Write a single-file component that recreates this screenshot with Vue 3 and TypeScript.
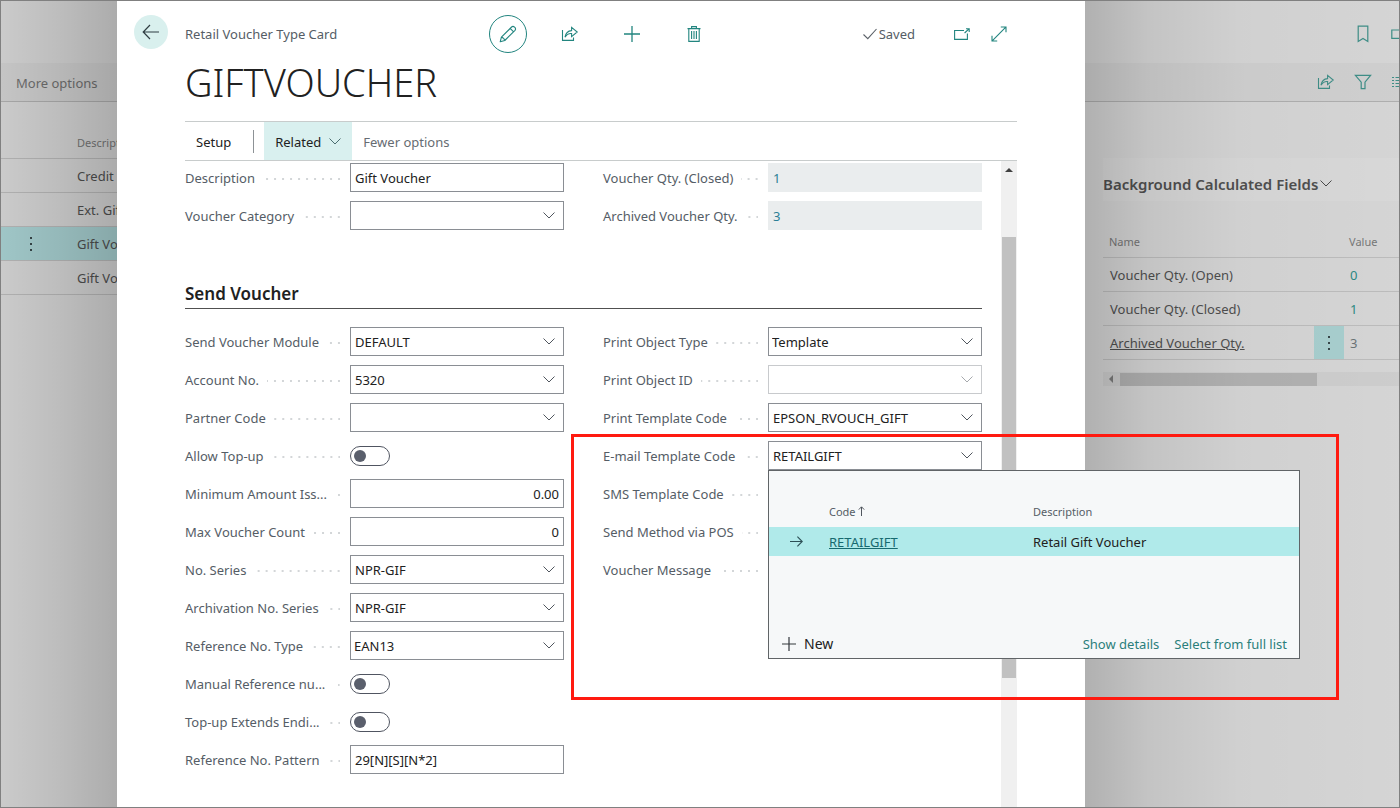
<script setup lang="ts">
import { ref } from 'vue'

type Kind = 'text' | 'number' | 'lookup' | 'option' | 'toggle' | 'readonly'

interface Field {
  id: string
  label: string
  kind: Kind
  value?: string
  disabled?: boolean
  popup?: boolean
}

const generalFields = ref<Field[][]>([
  [
    { id: 'description', label: 'Description', kind: 'text', value: 'Gift Voucher' },
    { id: 'category', label: 'Voucher Category', kind: 'option', value: '' },
  ],
  [
    { id: 'qty-closed', label: 'Voucher Qty. (Closed)', kind: 'readonly', value: '1' },
    { id: 'qty-archived', label: 'Archived Voucher Qty.', kind: 'readonly', value: '3' },
  ],
])

const sendFields = ref<Field[][]>([
  [
    { id: 'module', label: 'Send Voucher Module', kind: 'lookup', value: 'DEFAULT' },
    { id: 'account', label: 'Account No.', kind: 'lookup', value: '5320' },
    { id: 'partner', label: 'Partner Code', kind: 'lookup', value: '' },
    { id: 'topup', label: 'Allow Top-up', kind: 'toggle' },
    { id: 'minimum', label: 'Minimum Amount Iss...', kind: 'number', value: '0.00' },
    { id: 'max-count', label: 'Max Voucher Count', kind: 'number', value: '0' },
    { id: 'series', label: 'No. Series', kind: 'lookup', value: 'NPR-GIF' },
    { id: 'archive-series', label: 'Archivation No. Series', kind: 'lookup', value: 'NPR-GIF' },
    { id: 'ref-type', label: 'Reference No. Type', kind: 'option', value: 'EAN13' },
    { id: 'manual-ref', label: 'Manual Reference nu...', kind: 'toggle' },
    { id: 'extends', label: 'Top-up Extends Endi...', kind: 'toggle' },
    { id: 'pattern', label: 'Reference No. Pattern', kind: 'text', value: '29[N][S][N*2]' },
  ],
  [
    { id: 'print-type', label: 'Print Object Type', kind: 'option', value: 'Template' },
    { id: 'print-id', label: 'Print Object ID', kind: 'lookup', value: '', disabled: true },
    { id: 'print-template', label: 'Print Template Code', kind: 'lookup', value: 'EPSON_RVOUCH_GIFT' },
    { id: 'email-template', label: 'E-mail Template Code', kind: 'lookup', value: 'RETAILGIFT', popup: true },
    { id: 'sms-template', label: 'SMS Template Code', kind: 'lookup', value: '' },
    { id: 'send-method', label: 'Send Method via POS', kind: 'option', value: '' },
    { id: 'message', label: 'Voucher Message', kind: 'text', value: '' },
  ],
])

const groups = [
  { title: '', columns: generalFields },
  { title: 'Send Voucher', columns: sendFields },
]

const listRows = [
  { text: 'Credit', selected: false },
  { text: 'Ext. Gift', selected: false },
  { text: 'Gift Voucher', selected: true },
  { text: 'Gift Voucher', selected: false },
]

const factRows = [
  { name: 'Voucher Qty. (Open)', value: '0', current: false },
  { name: 'Voucher Qty. (Closed)', value: '1', current: false },
  { name: 'Archived Voucher Qty.', value: '3', current: true },
]
</script>

<template>
  <div class="page">
    <aside class="back-list">
      <div class="strip"></div>
      <div class="strip bar"><button type="button" class="plain">More options</button></div>
      <table class="list">
        <thead>
          <tr><th class="mark"></th><th>Description</th></tr>
        </thead>
        <tbody>
          <tr v-for="(row, i) in listRows" :key="i" :class="{ selected: row.selected }">
            <td class="mark">
              <svg v-if="row.selected" width="4" height="16" viewBox="0 0 4 16" fill="#38474a"><path d="M1 1h2v2H1zM1 7h2v2H1zM1 13h2v2H1z" /></svg>
            </td>
            <td>{{ row.text }}</td>
          </tr>
        </tbody>
      </table>
    </aside>

    <main class="card">
      <header class="top">
        <button type="button" class="back" aria-label="Back">
          <svg width="18" height="16" viewBox="0 0 18 16" fill="none" stroke="#2f3d42" stroke-width="1.2"><path d="M17 8H1.5M8 1L1.2 8L8 15" /></svg>
        </button>
        <span class="caption">Retail Voucher Type Card</span>
        <div class="tools">
          <button type="button" class="tool ring" aria-label="Edit">
            <svg width="18" height="18" viewBox="0 0 18 18" fill="none" stroke="#22857f" stroke-width="1.1" stroke-linejoin="round"><path d="M1.2 16.8L2.4 12.2L12.6 2Q14 .6 15.6 2.2Q17.3 3.8 16 5.3L5.8 15.5ZM2.4 12.2Q4.4 12.2 4.2 13.8Q5.9 13.6 5.8 15.5M11.2 3.4L14.6 6.8" /></svg>
          </button>
          <button type="button" class="tool" aria-label="Share">
            <svg width="18" height="16" viewBox="0 0 18 16" fill="none" stroke="#22857f" stroke-width="1.1"><path d="M1.5 4V14.4H12.5V11.5M4 11.2Q5 5 10.6 4.6V1.4L16.2 6L10.6 10.6V7.6Q6.6 7.2 4 11.2Z" /></svg>
          </button>
          <button type="button" class="tool" aria-label="New">
            <svg width="16" height="16" viewBox="0 0 16 16" fill="none" stroke="#22857f" stroke-width="1.3"><path d="M8 0V16M0 8H16" /></svg>
          </button>
          <button type="button" class="tool" aria-label="Delete">
            <svg width="14" height="16" viewBox="0 0 14 16" fill="none" stroke="#22857f" stroke-width="1.1"><path d="M.5 2.6H13.5M4.6 2.4V.6H9.4V2.4M1.8 2.6V15.4H12.2V2.6M4.6 5V13M7 5V13M9.4 5V13" /></svg>
          </button>
        </div>
        <div class="state">
          <svg width="14" height="12" viewBox="0 0 14 12" fill="none" stroke="#5b6168" stroke-width="1.1"><path d="M.5 6.5L4.8 10.7L13.5 1" /></svg>
          <span>Saved</span>
        </div>
        <div class="window">
          <button type="button" class="small" aria-label="Open in new window">
            <svg width="16" height="12" viewBox="0 0 16 12" fill="none" stroke="#22857f" stroke-width="1.1"><path d="M10 2.5H.6V11.4H13.4V5.4M10.6 5L15 .8M12 .8H15.2V4" /></svg>
          </button>
          <button type="button" class="small" aria-label="Expand">
            <svg width="16" height="16" viewBox="0 0 16 16" fill="none" stroke="#22857f" stroke-width="1.1"><path d="M1.2 14.8L14.8 1.2M9.8 1H15V6.2M1 9.8V15H6.2" /></svg>
          </button>
        </div>
      </header>

      <h1>GIFTVOUCHER</h1>

      <nav class="commands">
        <button type="button" class="cmd">Setup</button>
        <span class="divider"></span>
        <button type="button" class="cmd open">
          Related
          <svg width="12" height="7" viewBox="0 0 12 7" fill="none" stroke="#4b6d70" stroke-width="1"><path d="M.5 .5L6 6L11.5 .5" /></svg>
        </button>
        <button type="button" class="cmd muted">Fewer options</button>
      </nav>

      <div class="scroll">
        <form class="content" @submit.prevent>
          <section v-for="(group, g) in groups" :key="g">
            <h2 v-if="group.title">{{ group.title }}</h2>
            <div class="columns">
              <div v-for="(column, c) in group.columns.value" :key="c" class="column">
                <div v-for="f in column" :key="f.id" class="field">
                  <label :for="f.id">{{ f.label }}</label>
                  <span class="dots"></span>
                  <div class="control" :class="[f.kind, { disabled: f.disabled }]">
                    <label v-if="f.kind === 'toggle'" class="switch">
                      <input :id="f.id" type="checkbox" role="switch" />
                    </label>
                    <template v-else-if="f.kind === 'option'">
                      <select :id="f.id" v-model="f.value"><option :value="f.value">{{ f.value }}</option></select>
                      <svg class="arrow" width="12" height="7" viewBox="0 0 12 7" fill="none" stroke="#50565e" stroke-width="1"><path d="M.5 .5L6 6L11.5 .5" /></svg>
                    </template>
                    <template v-else>
                      <input :id="f.id" v-model="f.value" type="text" :readonly="f.kind === 'readonly'" :disabled="f.disabled" />
                      <button v-if="f.kind === 'lookup'" type="button" class="pick" :disabled="f.disabled" :aria-label="'Choose ' + f.label">
                        <svg width="12" height="7" viewBox="0 0 12 7" fill="none" stroke="#50565e" stroke-width="1"><path d="M.5 .5L6 6L11.5 .5" /></svg>
                      </button>
                    </template>

                    <div v-if="f.popup" class="popup">
                      <table class="choices">
                        <thead>
                          <tr>
                            <th class="lead"></th>
                            <th class="code">Code <svg width="7" height="10" viewBox="0 0 7 10" fill="none" stroke="#50565e" stroke-width="1"><path d="M3.5 10V1M.8 3.6L3.5 .8L6.2 3.6" /></svg></th>
                            <th>Description</th>
                          </tr>
                        </thead>
                        <tbody>
                          <tr>
                            <td class="lead"><svg width="13" height="11" viewBox="0 0 13 11" fill="none" stroke="#2c4f55" stroke-width="1.1"><path d="M0 5.5H12M7.4 .7L12.2 5.5L7.4 10.3" /></svg></td>
                            <td class="code"><a href="#">RETAILGIFT</a></td>
                            <td>Retail Gift Voucher</td>
                          </tr>
                        </tbody>
                      </table>
                      <div class="actions">
                        <button type="button" class="new">
                          <svg width="14" height="14" viewBox="0 0 14 14" fill="none" stroke="#33383d" stroke-width="1.2"><path d="M7 0V14M0 7H14" /></svg>
                          New
                        </button>
                        <a href="#" class="details">Show details</a>
                        <a href="#">Select from full list</a>
                      </div>
                    </div>
                  </div>
                  <div v-if="f.popup" class="highlight"></div>
                </div>
              </div>
            </div>
          </section>
        </form>
        <div class="scrollbar">
          <svg width="8" height="4" viewBox="0 0 8 4" fill="#404040"><path d="M0 4L4 0L8 4Z" /></svg>
          <div class="thumb"></div>
        </div>
      </div>
    </main>

    <aside class="back-facts">
      <div class="strip icons">
        <svg width="18" height="18" viewBox="0 0 18 18" fill="none" stroke="#3f8f88" stroke-width="1.2"><path d="M4.2 1.2H13.8V16.4L9 13.4L4.2 16.4Z" /></svg>
        <svg width="18" height="18" viewBox="0 0 18 18" fill="none" stroke="#3f8f88" stroke-width="1.2"><path d="M10 5H.8V13.4H13V8" /></svg>
      </div>
      <div class="strip bar icons">
        <svg width="18" height="18" viewBox="0 0 18 18" fill="none" stroke="#3f8f88" stroke-width="1.1"><path d="M1.5 5V15.4H12.5V12.5M4 12.2Q5 6 10.6 5.6V2.4L16.2 7L10.6 11.6V8.6Q6.6 8.2 4 12.2Z" /></svg>
        <svg width="18" height="18" viewBox="0 0 18 18" fill="none" stroke="#3f8f88" stroke-width="1.2"><path d="M1.4 2.4H16.6L11 9.2V15.6H7.2V9.2Z" /></svg>
        <svg width="18" height="18" viewBox="0 0 18 18" fill="none" stroke="#3f8f88" stroke-width="1.2"><path d="M1 4.5H3M4.5 4.5H18M1 7.5H3M4.5 7.5H18M1 10.5H3M4.5 10.5H18M1 13.5H3M4.5 13.5H18" /></svg>
      </div>
      <div class="facts">
        <h3>Background Calculated Fields
          <svg width="12" height="7" viewBox="0 0 12 7" fill="none" stroke="#4a4a4a" stroke-width="1"><path d="M.5 .5L6 6L11.5 .5" /></svg>
        </h3>
        <table>
          <thead>
            <tr><th>Name</th><th class="menu"></th><th class="value">Value</th></tr>
          </thead>
          <tbody>
            <tr v-for="row in factRows" :key="row.name" :class="{ current: row.current }">
              <td>{{ row.name }}</td>
              <td class="menu">
                <svg v-if="row.current" width="4" height="16" viewBox="0 0 4 16" fill="#38474a"><path d="M1 1h2v2H1zM1 7h2v2H1zM1 13h2v2H1z" /></svg>
              </td>
              <td class="value">{{ row.value }}</td>
            </tr>
          </tbody>
        </table>
        <div class="hbar">
          <svg width="4" height="8" viewBox="0 0 4 8" fill="#7c7c7c"><path d="M4 0V8L0 4Z" /></svg>
          <div class="hthumb"></div>
        </div>
      </div>
    </aside>
  </div>
</template>

<style>
body {
  margin: 0;
}
</style>

<style scoped>
.page,
.page * {
  box-sizing: border-box;
}
.page {
  display: grid;
  grid-template-columns: 116px minmax(0, 1fr) 314px;
  min-height: 100vh;
  border: 1px solid #808080;
  font-family: 'Noto Sans', 'Open Sans', sans-serif;
  font-size: 13px;
  line-height: 20px;
  color: #555d66;
  overflow: hidden;
}
button,
input,
select {
  font: inherit;
  color: inherit;
  border: 0;
  margin: 0;
  padding: 0;
  background: none;
}
svg {
  display: block;
  flex: none;
}
table {
  border-collapse: separate;
  border-spacing: 0;
  table-layout: fixed;
}
th {
  font-weight: 400;
  font-size: 11px;
  text-align: left;
  padding: 0;
}
td {
  padding: 0;
}

/* dimmed page behind the card */
.back-list,
.back-facts {
  position: relative;
  overflow: hidden;
  background: #d7d7d7;
  color: #505050;
}
.back-list::after,
.back-facts::after {
  content: '';
  position: absolute;
  inset: 0;
  pointer-events: none;
}
.back-list::after {
  background: linear-gradient(to left, rgba(0, 0, 0, 0.2), rgba(0, 0, 0, 0.12) 50%, rgba(0, 0, 0, 0.06));
}
.back-facts::after {
  background: linear-gradient(to right, rgba(0, 0, 0, 0.18), rgba(0, 0, 0, 0.09) 20%, rgba(0, 0, 0, 0.03) 50%, rgba(0, 0, 0, 0.01));
}
.strip {
  display: flex;
  align-items: center;
  height: 62px;
}
.strip.bar {
  height: 39px;
  background: #d1d1d1;
  border-bottom: 1px solid #b0b0b0;
}
.plain {
  padding: 1px 0 0 15px;
  color: #707070;
  white-space: nowrap;
}
.icons {
  justify-content: flex-end;
  gap: 19px;
  margin-right: -10px;
  padding-top: 4px;
}
.icons.bar {
  padding-top: 0;
}
.list {
  width: 196px;
}
.list th,
.list td {
  height: 34px;
  border-bottom: 1px solid #bababa;
  white-space: nowrap;
}
.list th {
  height: 57px;
  padding-top: 25px;
  color: #777;
}
.list .mark {
  width: 76px;
  padding-left: 28px;
}
.list .selected td {
  background: #a9d2d3;
}

.facts {
  margin: 56px 0 0 18px;
}
.facts h3 {
  display: flex;
  align-items: center;
  gap: 2px;
  height: 43px;
  margin: 0;
  padding-top: 8px;
  background: #dadada;
  font-size: 15px;
  font-weight: 600;
  white-space: nowrap;
}
.facts table {
  width: 100%;
}
.facts th,
.facts td {
  height: 34px;
  padding-left: 7px;
  border-bottom: 1px solid #bebebe;
}
.facts th {
  height: 57px;
  padding: 25px 0 0 6px;
  color: #777;
}
.facts .menu {
  width: 30px;
  padding-left: 13px;
}
.facts .value {
  width: 55px;
  padding-left: 5px;
}
.facts td.value {
  padding-left: 6px;
  color: #2c8a84;
}
.facts .current td:first-child {
  text-decoration: underline;
}
.facts .current .menu {
  background: #a9d0d0;
}
.facts .current .value {
  color: #6b7476;
}
.hbar {
  display: flex;
  align-items: center;
  height: 14px;
  margin-top: 12px;
  padding-left: 6px;
  gap: 7px;
  background: #cfcfcf;
}
.hthumb {
  width: 68%;
  height: 13px;
  background: #b3b3b3;
}

/* card */
.card {
  display: flex;
  flex-direction: column;
  position: relative;
  z-index: 1;
  padding: 14px 68px 0;
  background: #fff;
}
.top {
  display: flex;
  align-items: center;
  height: 38px;
  margin-left: -51px;
  margin-right: 8px;
}
.back {
  display: grid;
  place-items: center;
  align-self: flex-start;
  width: 34px;
  height: 34px;
  margin-right: 17px;
  border-radius: 50%;
  background: #d9f0ee;
}
.caption {
  width: 304px;
  white-space: nowrap;
}
.tools {
  display: flex;
  gap: 24px;
}
.tool {
  display: grid;
  place-items: center;
  width: 38px;
  height: 38px;
}
.ring {
  border: 1px solid #22857f;
  border-radius: 50%;
}
.state {
  display: flex;
  align-items: center;
  gap: 2px;
  margin-left: auto;
}
.window {
  display: flex;
  gap: 17px;
  margin-left: 37px;
}
.small {
  display: grid;
  place-items: center;
  width: 20px;
  height: 20px;
}
h1 {
  margin: 7px 0 17px;
  font-size: 38px;
  line-height: 44px;
  font-weight: 300;
  color: #212121;
}
.commands {
  display: flex;
  align-items: center;
  height: 40px;
  border-top: 1px solid #c8cccc;
  border-bottom: 1px solid #c8cccc;
}
.cmd {
  height: 38px;
  padding: 1px 11px 0;
  color: #212121;
}
.cmd.open {
  display: flex;
  align-items: center;
  gap: 8px;
  background: #d9f0ef;
}
.cmd.muted {
  color: #666c72;
}
.divider {
  width: 1px;
  height: 23px;
  margin: 0 10px 0 11px;
  background: #8d9296;
}
.scroll {
  display: flex;
  flex: 1;
}
.content {
  flex: 1;
  min-width: 0;
  padding: 2px 0 33px;
}
.columns {
  display: grid;
  grid-template-columns: 1fr 1fr;
  gap: 39px;
}
.column {
  display: flex;
  flex-direction: column;
  gap: 9px;
}
h2 {
  margin: 50px 0 18px;
  border-bottom: 1px solid #505050;
  font-size: 17px;
  line-height: 28px;
  font-weight: 600;
  color: #212121;
}
.field {
  display: grid;
  grid-template-columns: auto minmax(0, 1fr) calc(100% - 165px);
  align-items: center;
  position: relative;
  height: 29px;
}
.field > label {
  white-space: nowrap;
}
.dots {
  height: 2px;
  margin: 2px 10px 0 8px;
  background: linear-gradient(to right, transparent 6px, #d3d6d8 6px) right / 8px 2px repeat-x;
}
.control {
  display: flex;
  align-items: center;
  position: relative;
  height: 29px;
  border: 1px solid #8a8e94;
  background: #fff;
  color: #212121;
}
.control input[type='text'],
.control select {
  flex: 1;
  width: 100%;
  min-width: 0;
  height: 27px;
  padding: 0 4px;
  outline: 0;
}
.control select {
  appearance: none;
  padding-left: 3px;
}
.control.number input {
  text-align: right;
}
.control.readonly {
  border-color: #eaedee;
  background: #eaedee;
  color: #2b7f96;
}
.control.disabled {
  border-color: #c8cacd;
}
.control.disabled .pick {
  opacity: 0.5;
}
.control.toggle {
  border: 0;
}
.pick {
  display: grid;
  place-items: center;
  width: 28px;
  height: 27px;
}
.arrow {
  position: absolute;
  right: 8px;
  pointer-events: none;
}
.switch {
  display: flex;
}
.switch input {
  appearance: none;
  display: flex;
  align-items: center;
  width: 40px;
  height: 20px;
  padding-left: 3px;
  border: 1px solid #505561;
  border-radius: 10px;
}
.switch input::before {
  content: '';
  width: 12px;
  height: 12px;
  border-radius: 50%;
  background: #5a5f6c;
}
.switch input:checked {
  justify-content: flex-end;
  padding: 0 3px 0 0;
}

.popup {
  display: flex;
  flex-direction: column;
  position: absolute;
  z-index: 3;
  top: 28px;
  left: -1px;
  width: 532px;
  height: 189px;
  border: 1px solid #606467;
  background: #f6f8f9;
}
.choices {
  width: 100%;
}
.choices th {
  height: 56px;
  padding-top: 25px;
  color: #555d66;
}
.choices td {
  height: 29px;
  background: #b0eaea;
}
.choices .lead {
  width: 60px;
}
.choices .lead svg {
  margin-left: 21px;
}
.choices .code {
  width: 204px;
}
.choices .code svg {
  display: inline;
}
.choices td.code a {
  color: #17696f;
}
.actions {
  display: flex;
  align-items: center;
  gap: 15px;
  margin-top: auto;
  padding: 0 12px 4px 13px;
}
.actions a {
  color: #2b7f7b;
  text-decoration: none;
}
.new {
  display: flex;
  align-items: center;
  gap: 8px;
  font-size: 14px;
}
.actions .details {
  margin-left: auto;
}
.highlight {
  position: absolute;
  z-index: 4;
  top: -7px;
  left: -32px;
  width: 768px;
  height: 266px;
  border: 3px solid #ff1a10;
  pointer-events: none;
}

.scrollbar {
  display: flex;
  flex-direction: column;
  align-items: center;
  width: 16px;
  margin-left: 19px;
  padding-top: 7px;
  background: #f0f0f0;
}
.thumb {
  width: 14px;
  height: 441px;
  margin-top: 65px;
  background: #c1c1c1;
}
</style>
